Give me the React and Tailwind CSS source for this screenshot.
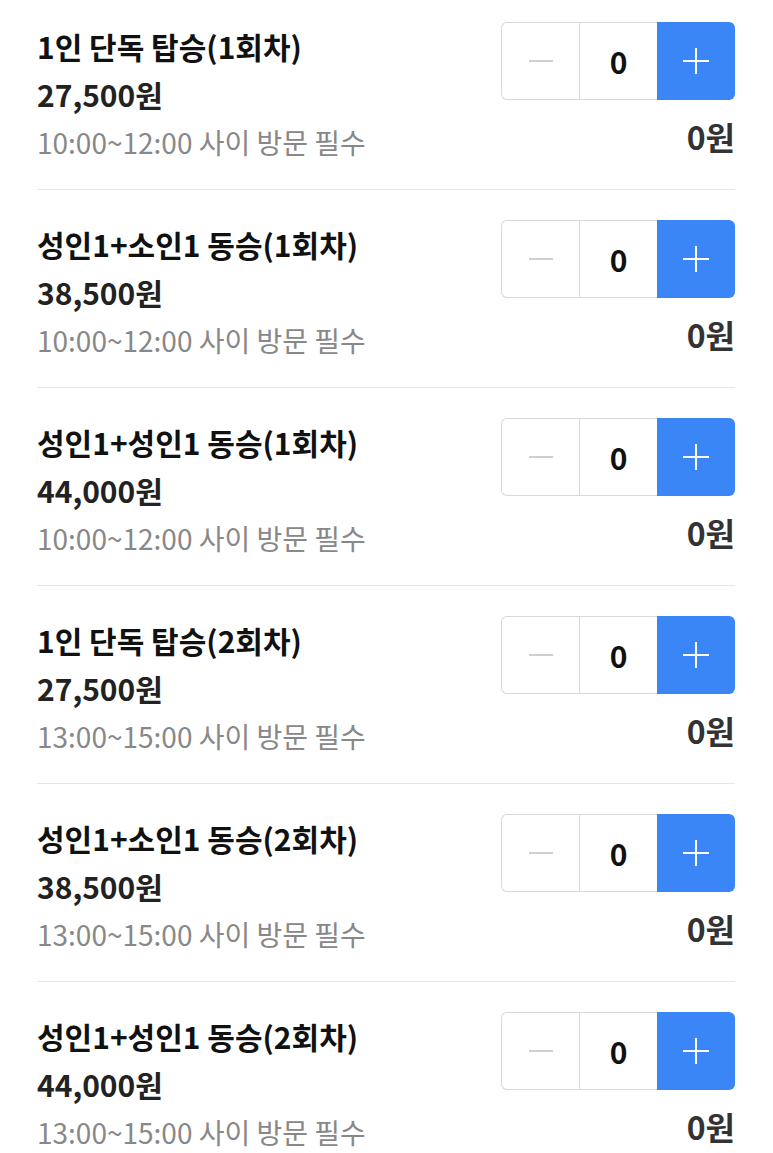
import React from "react";

const items = [
  { title: "1인 단독 탑승(1회차)", price: "27,500원", time: "10:00~12:00 사이 방문 필수" },
  { title: "성인1+소인1 동승(1회차)", price: "38,500원", time: "10:00~12:00 사이 방문 필수" },
  { title: "성인1+성인1 동승(1회차)", price: "44,000원", time: "10:00~12:00 사이 방문 필수" },
  { title: "1인 단독 탑승(2회차)", price: "27,500원", time: "13:00~15:00 사이 방문 필수" },
  { title: "성인1+소인1 동승(2회차)", price: "38,500원", time: "13:00~15:00 사이 방문 필수" },
  { title: "성인1+성인1 동승(2회차)", price: "44,000원", time: "13:00~15:00 사이 방문 필수" },
];

function Stepper() {
  return (
    <div className="flex h-[78px] w-[234px]">
      <div className="flex h-full w-[78px] items-center justify-center rounded-l-[6px] border-y-[1.5px] border-l-[1.5px] border-[#d9d9d9] bg-white">
        <div className="h-[1.5px] w-[24px] bg-[#cfcfcf]" />
      </div>
      <div className="flex h-full w-[78px] items-center justify-center border-y-[1.5px] border-l-[1.5px] border-[#d9d9d9] bg-white">
        <span className="text-[30px] font-bold leading-none text-[#111]">0</span>
      </div>
      <div className="flex h-full w-[78px] items-center justify-center rounded-r-[6px] bg-[#3a86f6]">
        <svg width="28" height="28" viewBox="0 0 28 28">
          <path d="M14 1v26M1 14h26" stroke="#fff" strokeWidth="2" />
        </svg>
      </div>
    </div>
  );
}

export default function App() {
  return (
    <div
      className="w-[773px] bg-white pl-[37px] pr-[38px]"
      style={{ fontFamily: '"Noto Sans CJK KR", "Noto Sans", sans-serif' }}
    >
      {items.map((it, i) => (
        <div
          key={i}
          className={`flex justify-between ${i === 0 ? "pt-[22px]" : "pt-[30px]"} pb-[23px] ${
            i < items.length - 1 ? "border-b border-[#e6e6e6]" : ""
          }`}
        >
          <div className="flex flex-col">
            <div className="text-[30px] font-bold leading-[48px] text-[#111]">{it.title}</div>
            <div className="text-[30px] font-bold leading-[48px] text-[#222]">{it.price}</div>
            <div className="text-[28px] leading-[48px] text-[#888]">{it.time}</div>
          </div>
          <div className="flex flex-col items-end">
            <Stepper />
            <div className="mt-[16px] text-[32px] font-bold leading-[40px] text-[#333]">0원</div>
          </div>
        </div>
      ))}
    </div>
  );
}
